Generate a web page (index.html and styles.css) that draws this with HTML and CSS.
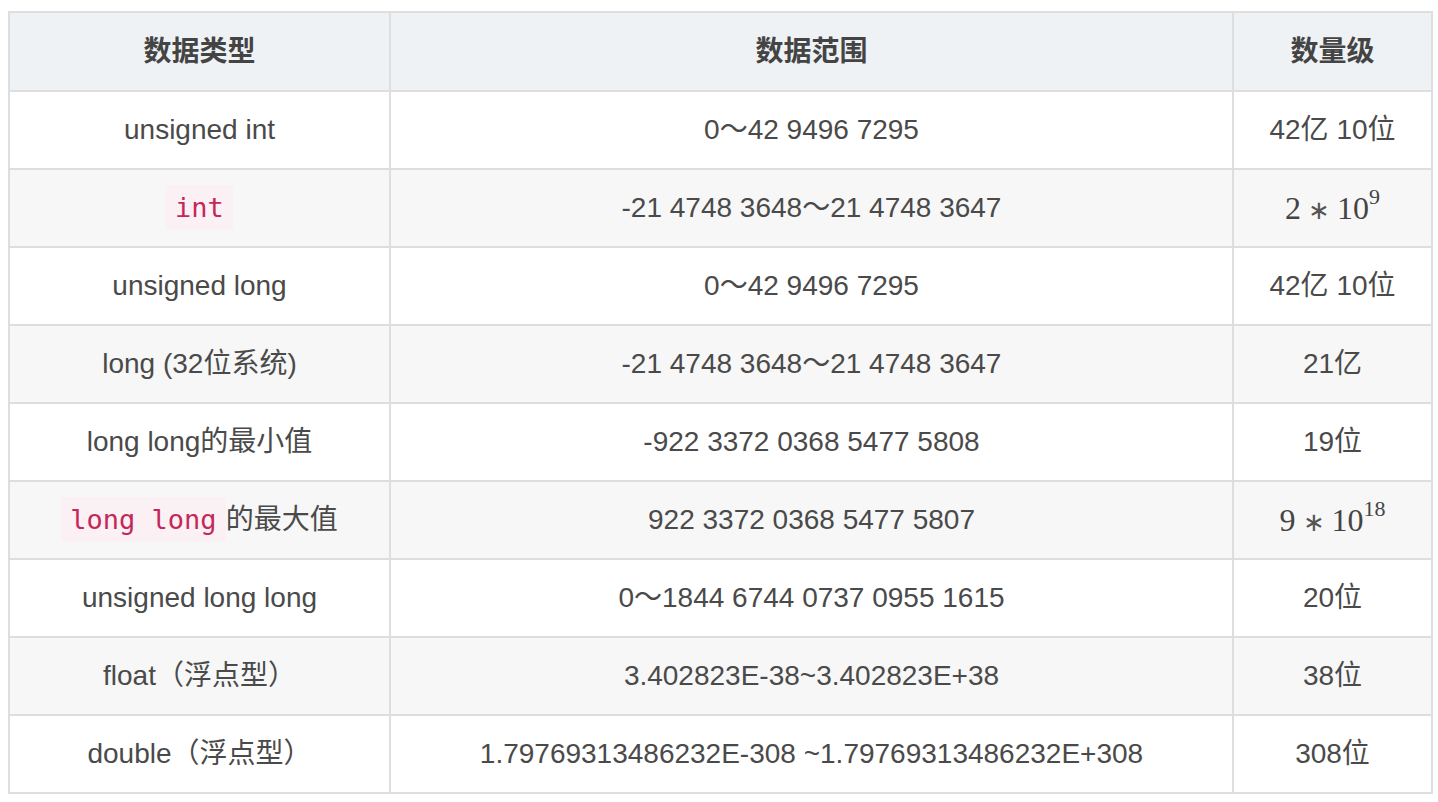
FILE: index.html
```html
<!DOCTYPE html>
<html lang="zh">
<head>
<meta charset="utf-8">
<title>数据类型</title>
<link rel="stylesheet" href="styles.css">
</head>
<body>
<table class="data-table">
  <colgroup>
    <col class="c1">
    <col class="c2">
    <col class="c3">
  </colgroup>
  <thead>
    <tr><th>数据类型</th><th>数据范围</th><th>数量级</th></tr>
  </thead>
  <tbody>
    <tr><td>unsigned int</td><td>0～42 9496 7295</td><td>42亿 10位</td></tr>
    <tr><td><code>int</code></td><td>-21 4748 3648～21 4748 3647</td><td><span class="math">2<span class="op">∗</span>10<sup>9</sup></span></td></tr>
    <tr><td>unsigned long</td><td>0～42 9496 7295</td><td>42亿 10位</td></tr>
    <tr><td>long (32位系统)</td><td>-21 4748 3648～21 4748 3647</td><td>21亿</td></tr>
    <tr><td>long long的最小值</td><td>-922 3372 0368 5477 5808</td><td>19位</td></tr>
    <tr><td><code>long long</code>的最大值</td><td>922 3372 0368 5477 5807</td><td><span class="math">9<span class="op">∗</span>10<sup>18</sup></span></td></tr>
    <tr><td>unsigned long long</td><td>0～1844 6744 0737 0955 1615</td><td>20位</td></tr>
    <tr><td>float（浮点型）</td><td>3.402823E-38~3.402823E+38</td><td>38位</td></tr>
    <tr><td>double（浮点型）</td><td>1.79769313486232E-308 ~1.79769313486232E+308</td><td>308位</td></tr>
  </tbody>
</table>
</body>
</html>
```
FILE: styles.css
```css
html, body {
  margin: 0;
  background: #ffffff;
}
body {
  padding: 11px 0 0 8px;
  font-family: "Liberation Sans", Arial, "Noto Sans CJK SC", sans-serif;
  font-size: 28px;
  color: #4a4a4a;
}
.data-table {
  border-collapse: collapse;
  table-layout: fixed;
  width: 1423px;
}
.c1 { width: 381px; }
.c2 { width: 843px; }
.c3 { width: 199px; }
.data-table th,
.data-table td {
  border: 2px solid #dedede;
  text-align: center;
  vertical-align: middle;
  padding: 0 10px;
  height: 78px;
  box-sizing: border-box;
  line-height: 1.2;
}
.data-table th {
  background: #eff2f5;
  font-weight: bold;
  color: #444444;
  height: 79px;
}
.data-table tbody tr:nth-child(even) td {
  background: #f7f7f7;
}
.data-table code {
  font-family: "DejaVu Sans Mono", "Liberation Mono", monospace;
  font-size: 27px;
  color: #c4285a;
  background: #fbf0f3;
  padding: 7px 9px;
  border-radius: 3px;
}
.math {
  font-family: "Liberation Serif", "Times New Roman", serif;
  font-size: 32px;
  color: #444444;
}
.math .op {
  margin: 0 7px;
  font-size: 26px;
  color: #555555;
}
.math sup {
  font-size: 22px;
  vertical-align: 0;
  position: relative;
  top: -15px;
}
```
